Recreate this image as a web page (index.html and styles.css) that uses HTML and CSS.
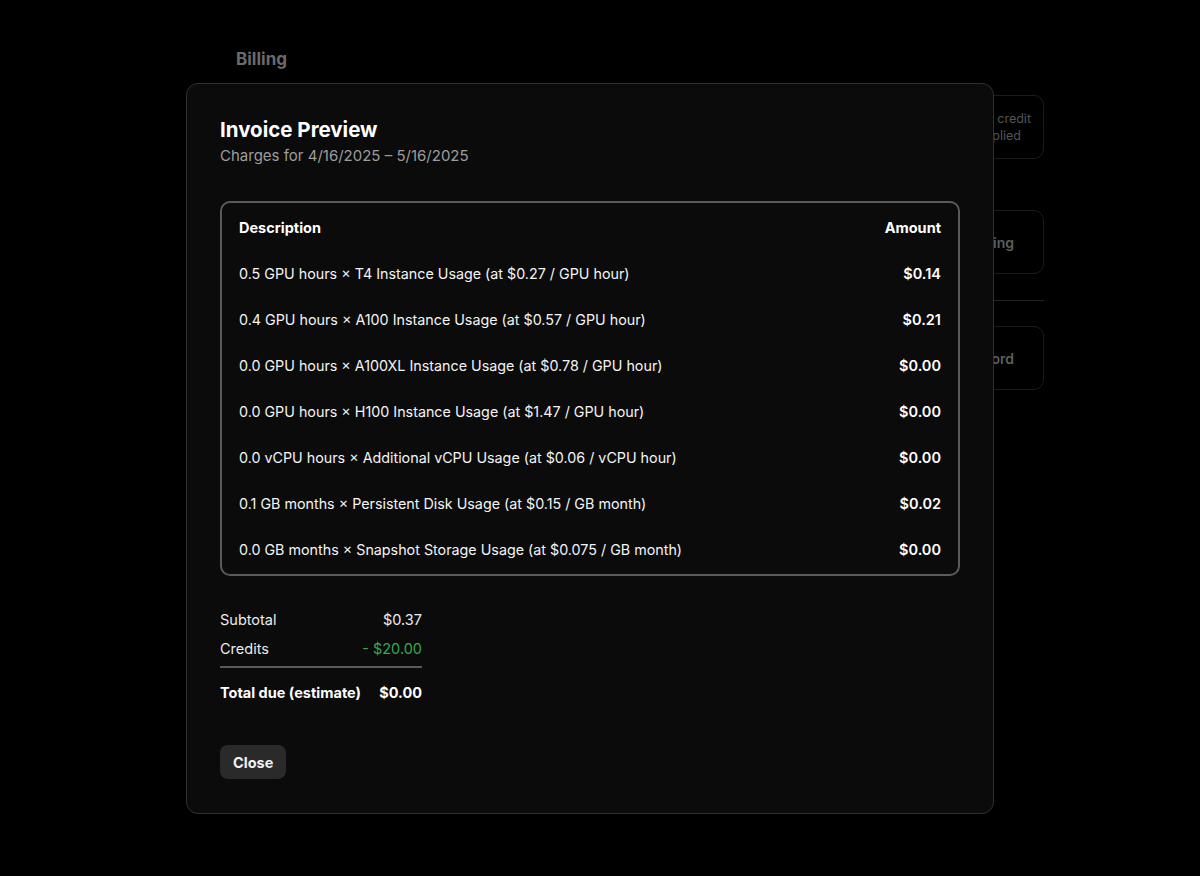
FILE: index.html
```html
<!DOCTYPE html>
<html>
<head>
<meta charset="utf-8">
<link rel="stylesheet" href="styles.css">
</head>
<body>
<div class="page">
  <h1 class="page-title">Billing</h1>
  <div class="page-body">
    <div class="page-main"></div>
    <div class="page-side">
      <div class="side-card side-card--text"><span>Free credit<br>applied</span></div>
      <div class="side-card side-card--bold">Billing</div>
      <div class="side-divider"></div>
      <div class="side-card side-card--bold">Record</div>
    </div>
  </div>
</div>

<div class="modal">
  <h2 class="modal-title">Invoice Preview</h2>
  <p class="modal-sub">Charges for 4/16/2025 – 5/16/2025</p>

  <div class="table">
    <div class="row row--head"><span>Description</span><span>Amount</span></div>
    <div class="row"><span>0.5 GPU hours × T4 Instance Usage (at $0.27 / GPU hour)</span><span class="amt">$0.14</span></div>
    <div class="row"><span>0.4 GPU hours × A100 Instance Usage (at $0.57 / GPU hour)</span><span class="amt">$0.21</span></div>
    <div class="row"><span>0.0 GPU hours × A100XL Instance Usage (at $0.78 / GPU hour)</span><span class="amt">$0.00</span></div>
    <div class="row"><span>0.0 GPU hours × H100 Instance Usage (at $1.47 / GPU hour)</span><span class="amt">$0.00</span></div>
    <div class="row"><span>0.0 vCPU hours × Additional vCPU Usage (at $0.06 / vCPU hour)</span><span class="amt">$0.00</span></div>
    <div class="row"><span>0.1 GB months × Persistent Disk Usage (at $0.15 / GB month)</span><span class="amt">$0.02</span></div>
    <div class="row"><span>0.0 GB months × Snapshot Storage Usage (at $0.075 / GB month)</span><span class="amt">$0.00</span></div>
  </div>

  <div class="summary">
    <div class="sum-row"><span>Subtotal</span><span>$0.37</span></div>
    <div class="sum-row"><span>Credits</span><span class="green">- $20.00</span></div>
    <div class="sum-line"></div>
    <div class="sum-row sum-row--total"><span>Total due (estimate)</span><span>$0.00</span></div>
  </div>

  <button class="btn">Close</button>
</div>
</body>
</html>
```

FILE: styles.css
```css
* { box-sizing: border-box; }
html, body { margin: 0; padding: 0; }
body {
  background: #000;
  font-family: Inter, "Noto Sans", sans-serif;
  color: #f2f2f2;
  width: 1200px;
  height: 876px;
  overflow: hidden;
}
.page {
  padding: 47px 156px 0 236px;
}
.page-title {
  margin: 0;
  font-size: 17px;
  font-weight: 700;
  color: #6a6a6a;
  line-height: 24px;
}
.page-body {
  display: flex;
  margin-top: 24px;
}
.page-main { flex: 1; }
.page-side {
  width: 190px;
  display: flex;
  flex-direction: column;
}
.side-card {
  height: 64px;
  border: 1px solid #1c1c1c;
  border-radius: 10px;
  display: flex;
  align-items: center;
  justify-content: flex-end;
}
.side-card--text {
  font-size: 12.5px;
  line-height: 17px;
  color: #545454;
  padding-right: 12px;
  text-align: center;
}
.side-card--bold {
  font-size: 14px;
  font-weight: 600;
  color: #5e5e5e;
  padding-right: 29px;
}
.side-card + .side-card { margin-top: 51px; }
.side-divider {
  height: 1px;
  background: #222;
  margin: 26px 0 25px;
}

.modal {
  position: fixed;
  left: 186px;
  top: 83px;
  width: 808px;
  height: 731px;
  background: #0b0b0b;
  border: 1px solid #303030;
  border-radius: 12px;
  padding: 32px 33px 0 33px;
}
.modal-title {
  margin: 0;
  font-size: 20.5px;
  font-weight: 700;
  line-height: 28px;
  color: #fff;
}
.modal-sub {
  margin: 1px 0 0;
  font-size: 15px;
  line-height: 21px;
  color: #9d9d9d;
}
.table {
  margin-top: 35px;
  border: 2px solid #5a5a5a;
  border-radius: 10px;
  padding: 1px 17px;
}
.row {
  display: flex;
  justify-content: space-between;
  align-items: center;
  height: 46.1px;
  font-size: 14.3px;
  color: #f4f4f4;
}
.row--head {
  font-size: 14.5px;
  font-weight: 700;
  color: #fff;
}
.amt { font-weight: 600; color: #fff; font-size: 14.5px; }

.summary {
  width: 202px;
  margin-top: 29px;
  font-size: 14.5px;
}
.sum-row {
  display: flex;
  justify-content: space-between;
  line-height: 29px;
  color: #ececec;
}
.green { color: #35a853; }
.sum-line {
  height: 2px;
  background: #5a5a5a;
  margin: 3.5px 0 9.5px;
}
.sum-row--total {
  font-weight: 700;
  color: #fff;
}
.btn {
  margin-top: 38.5px;
  display: block;
  height: 34px;
  padding: 0 13px;
  border: none;
  border-radius: 8px;
  background: #2a2a2a;
  color: #f2f2f2;
  font-family: Inter, "Noto Sans", sans-serif;
  font-size: 14.5px;
  font-weight: 700;
}
```
